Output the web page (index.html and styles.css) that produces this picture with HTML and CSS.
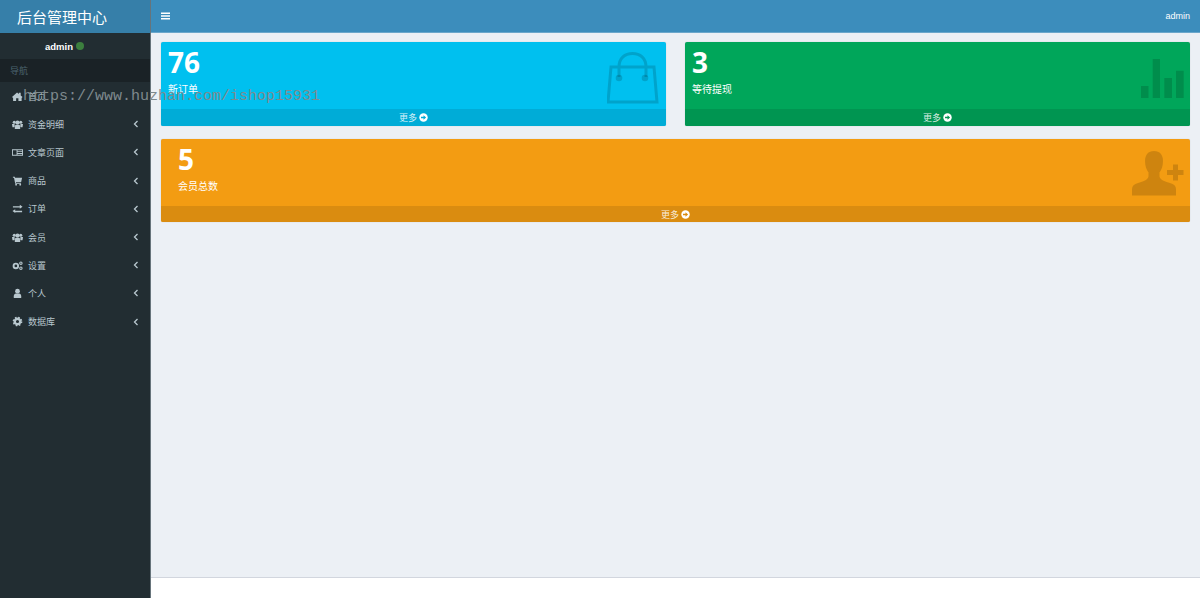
FILE: index.html
```html
<!DOCTYPE html>
<html lang="zh-CN">
<head>
  <meta charset="UTF-8">
  <title>后台管理中心</title>
  <link rel="stylesheet" href="styles.css">
</head>
<body>
  <aside class="sidebar">
    <div class="logo">后台管理中心</div>
    <div class="user-panel">admin <span class="online"></span></div>
    <div class="nav-label">导航</div>
    <ul class="menu">
      <li>
        <svg class="menu-icon" viewBox="0 0 12 12"><path d="M0 6.500 5.500 1.500 7.500 3.200V2H9.500V5L11.500 6.500 10.500 7.500V11H7V8H4.500V11H1.200V7.500Z"/></svg>
        <span>首页</span>
      </li>
      <li>
        <svg class="menu-icon" viewBox="0 0 12 12"><circle cx="2.500" cy="3.500" r="1.700"/><circle cx="9.500" cy="3.500" r="1.700"/><circle cx="6" cy="4" r="2.300"/><path d="M0 5.500H2.800L3 9H0.500ZM12 5.500H9.200L9 9H11.500ZM3.500 6.500H8.500L9 11H3Z"/></svg>
        <span>资金明细</span>
        <svg class="caret" viewBox="0 0 6 8"><path d="M4.500 1 1.500 4 4.500 7"/></svg>
      </li>
      <li>
        <svg class="menu-icon" viewBox="0 0 12 12"><path fill-rule="evenodd" d="M0 2.500H12V9.500H0ZM1 3.500V8.500H5V3.500ZM6 3.500V4.500H11V3.500ZM6 5.500V6.500H11V5.500ZM6 7.500V8.500H11V7.500Z"/></svg>
        <span>文章页面</span>
        <svg class="caret" viewBox="0 0 6 8"><path d="M4.500 1 1.500 4 4.500 7"/></svg>
      </li>
      <li>
        <svg class="menu-icon" viewBox="0 0 12 12"><path d="M1 2H3L3.300 3H11L10 7.500H4.200L4.400 8.500H9.800V9.500H3.500L2.200 3H1Z"/><circle cx="4.500" cy="10.500" r="1"/><circle cx="9" cy="10.500" r="1"/></svg>
        <span>商品</span>
        <svg class="caret" viewBox="0 0 6 8"><path d="M4.500 1 1.500 4 4.500 7"/></svg>
      </li>
      <li>
        <svg class="menu-icon" viewBox="0 0 12 12"><path d="M1 3.500H8.500V1.800L11.500 4.200 8.500 6.200V5H1ZM11 7V8.500H3.500V6.800L0.500 8.800 3.500 11V10H11Z"/></svg>
        <span>订单</span>
        <svg class="caret" viewBox="0 0 6 8"><path d="M4.500 1 1.500 4 4.500 7"/></svg>
      </li>
      <li>
        <svg class="menu-icon" viewBox="0 0 12 12"><circle cx="2.500" cy="3.500" r="1.700"/><circle cx="9.500" cy="3.500" r="1.700"/><circle cx="6" cy="4" r="2.300"/><path d="M0 5.500H2.800L3 9H0.500ZM12 5.500H9.200L9 9H11.500ZM3.500 6.500H8.500L9 11H3Z"/></svg>
        <span>会员</span>
        <svg class="caret" viewBox="0 0 6 8"><path d="M4.500 1 1.500 4 4.500 7"/></svg>
      </li>
      <li>
        <svg class="menu-icon" viewBox="0 0 12 12"><circle class="ring" cx="4.200" cy="6.500" r="2.500"/><circle class="ring thin" cx="9.700" cy="3.500" r="1.300"/><circle class="ring thin" cx="9.700" cy="9" r="1.300"/></svg>
        <span>设置</span>
        <svg class="caret" viewBox="0 0 6 8"><path d="M4.500 1 1.500 4 4.500 7"/></svg>
      </li>
      <li>
        <svg class="menu-icon" viewBox="0 0 12 12"><circle cx="6" cy="3.500" r="2.600"/><path d="M2 11C1.500 8 2.500 6.200 4 6H8C9.500 6.200 10.500 8 10 11Z"/></svg>
        <span>个人</span>
        <svg class="caret" viewBox="0 0 6 8"><path d="M4.500 1 1.500 4 4.500 7"/></svg>
      </li>
      <li>
        <svg class="menu-icon" viewBox="0 0 12 12"><circle class="ring cog" cx="6" cy="6" r="3"/><circle class="ring teeth" cx="6" cy="6" r="4.300"/></svg>
        <span>数据库</span>
        <svg class="caret" viewBox="0 0 6 8"><path d="M4.500 1 1.500 4 4.500 7"/></svg>
      </li>
    </ul>
  </aside>

  <div class="main">
    <header class="topbar">
      <svg class="bars" viewBox="0 0 9 8"><path d="M0 0.500H9V2H0ZM0 3.200H9V4.700H0ZM0 5.900H9V7.400H0Z"/></svg>
      <span class="top-user">admin</span>
    </header>

    <div class="content">
      <div class="card cyan">
        <div class="card-body">
          <div class="num">76</div>
          <div class="label">新订单</div>
          <svg class="bag-icon" viewBox="0 0 52 52"><path d="M4 15H47L50 50H1ZM12 25V15C12 6 18 1.500 25.500 1.500S39 6 39 15V25"/><circle cx="12" cy="26" r="3.300"/><circle cx="38" cy="26" r="3.300"/></svg>
        </div>
        <a class="more">更多 <svg class="arrow" viewBox="0 0 10 10"><circle cx="5" cy="5" r="4.700"/><path d="M2.200 4.200H5V2.400L7.900 5 5 7.600V5.800H2.200Z"/></svg></a>
      </div>

      <div class="card green">
        <div class="card-body">
          <div class="num">3</div>
          <div class="label">等待提现</div>
          <svg class="chart-icon" viewBox="0 0 43 39"><path d="M0 27H7.500V39H0ZM11.700 0H19V39H11.700ZM23.300 19H31V39H23.300ZM35 11.700H42.700V39H35Z"/></svg>
        </div>
        <a class="more">更多 <svg class="arrow" viewBox="0 0 10 10"><circle cx="5" cy="5" r="4.700"/><path d="M2.200 4.200H5V2.400L7.900 5 5 7.600V5.800H2.200Z"/></svg></a>
      </div>

      <div class="card orange wide">
        <div class="card-body">
          <div class="num">5</div>
          <div class="label">会员总数</div>
          <svg class="person-icon" viewBox="0 0 52 45"><path d="M22 0C28 0 31 4 31 10C31 15 29.500 19 27.500 21.500V25C27.500 28 31 30 38 32C42 33.200 44 35 44 38V44.500H0V38C0 35 2 33.200 6 32C13 30 16.500 28 16.500 25V21.500C14.500 19 13 15 13 10C13 4 16 0 22 0Z"/><path d="M35 19H41V13.500H46V19H51.500V24H46V29.500H41V24H35Z"/></svg>
        </div>
        <a class="more">更多 <svg class="arrow" viewBox="0 0 10 10"><circle cx="5" cy="5" r="4.700"/><path d="M2.200 4.200H5V2.400L7.900 5 5 7.600V5.800H2.200Z"/></svg></a>
      </div>
    </div>

    <footer class="page-foot"></footer>
  </div>

  <div class="watermark">https://www.huzhan.com/ishop15931</div>
</body>
</html>
```

FILE: styles.css
```css
* {
  box-sizing: border-box;
}

html, body {
  height: 100%;
}

body {
  margin: 0;
  display: flex;
  overflow: hidden;
  font-family: "Noto Sans", "Noto Sans CJK SC", sans-serif;
  font-size: 10px;
  background: #fff;
  color: #fff;
}

/* sidebar */
.sidebar {
  width: 151px;
  flex: none;
  background: #222d32;
  border-right: 1px solid #67747b;
}

.logo {
  height: 33px;
  background: #367fa9;
  font-family: "Noto Sans CJK SC", sans-serif;
  font-size: 15px;
  line-height: 34px;
  padding-left: 17px;
}

.user-panel {
  height: 26px;
  display: flex;
  align-items: center;
  justify-content: center;
  gap: 3px;
  padding-right: 21px;
  font-family: "Liberation Sans", sans-serif;
  font-weight: 700;
  font-size: 9.500px;
}

.online {
  width: 8px;
  height: 8px;
  border-radius: 50%;
  background: #3c7f3e;
}

.nav-label {
  height: 23px;
  background: #1a2226;
  color: #4b646f;
  font-size: 9px;
  line-height: 23px;
  padding-left: 10px;
  font-family: "Noto Sans CJK SC", sans-serif;
}

.menu {
  list-style: none;
  margin: 0;
  padding: 0;
}

.menu li {
  height: 28.2px;
  display: flex;
  align-items: center;
  padding: 0 11px 0 12px;
  color: #b8c7ce;
  font-size: 9px;
  font-family: "Noto Sans CJK SC", sans-serif;
}

.menu span {
  margin-left: 5px;
  flex: 1;
}

.menu-icon {
  width: 11px;
  height: 11px;
  fill: #b8c7ce;
  flex: none;
}

.ring {
  fill: none;
  stroke: #b8c7ce;
  stroke-width: 2;
}

.ring.thin {
  stroke-width: 1.200;
}

.ring.cog {
  stroke-width: 2.600;
}

.ring.teeth {
  stroke-width: 2;
  stroke-dasharray: 1.700 1.700;
}

.caret {
  width: 6px;
  height: 8px;
  fill: none;
  stroke: #b8c7ce;
  stroke-width: 1.300;
}

/* main */
.main {
  flex: 1;
  display: flex;
  flex-direction: column;
  min-width: 0;
}

.topbar {
  height: 33px;
  flex: none;
  display: flex;
  align-items: center;
  justify-content: space-between;
  padding: 0 10px;
  background: #3c8dbc;
  border-bottom: 1px solid #6ba7cb;
}

.bars {
  width: 9px;
  height: 8px;
  fill: #fff;
}

.top-user {
  font-family: "Liberation Sans", sans-serif;
  font-size: 9px;
}

.content {
  flex: 1;
  background: #ecf0f5;
  padding: 9px 10px 0;
  display: grid;
  grid-template-columns: 505px 505px;
  column-gap: 19px;
  row-gap: 13px;
  align-content: start;
}

.page-foot {
  height: 21px;
  flex: none;
  background: #fff;
  border-top: 1px solid #d2d6de;
}

.card {
  height: 84px;
  display: flex;
  flex-direction: column;
  border-radius: 2px;
  overflow: hidden;
  box-shadow: 0 0 1px rgba(0, 0, 0, 0.25);
}

.card.wide {
  grid-column: 1 / 3;
  height: 83px;
}

.card-body {
  flex: 1;
  position: relative;
  padding: 4px 7px;
}

.wide .card-body {
  padding-left: 17px;
}

.num {
  font-size: 28px;
  font-weight: 700;
  line-height: 32px;
}

.label {
  margin-top: 4px;
  font-family: "Noto Sans CJK SC", sans-serif;
  font-size: 10px;
  line-height: 14px;
}

.more {
  height: 17px;
  flex: none;
  display: flex;
  align-items: center;
  justify-content: center;
  gap: 2px;
  font-family: "Noto Sans CJK SC", sans-serif;
  font-size: 9px;
  color: rgba(255, 255, 255, 0.85);
}

.wide .more {
  height: 16px;
}

.arrow {
  width: 9px;
  height: 9px;
}

.arrow circle {
  fill: #fff;
}

.cyan {
  background: #00c0ef;
}

.cyan .more {
  background: #00acd7;
}

.cyan .arrow path {
  fill: #00acd7;
}

.green {
  background: #00a65a;
}

.green .more {
  background: #009551;
}

.green .arrow path {
  fill: #009551;
}

.orange {
  background: #f39c12;
}

.orange .more {
  background: #da8c10;
}

.orange .arrow path {
  fill: #da8c10;
}

/* big faded card icons */
.bag-icon, .chart-icon, .person-icon {
  position: absolute;
}

.bag-icon {
  right: 7px;
  top: 10px;
  width: 52px;
  height: 52px;
  fill: none;
  stroke: rgba(0, 0, 0, 0.15);
  stroke-width: 3;
}

.bag-icon circle {
  fill: rgba(0, 0, 0, 0.15);
  stroke: none;
}

.chart-icon {
  right: 6px;
  top: 17px;
  width: 43px;
  height: 39px;
  fill: rgba(0, 0, 0, 0.15);
}

.person-icon {
  right: 6px;
  top: 12px;
  width: 52px;
  height: 45px;
  fill: rgba(0, 0, 0, 0.15);
}

/* watermark laid over the page */
.watermark {
  position: absolute;
  left: 23px;
  top: 88px;
  font-family: "Liberation Mono", monospace;
  font-size: 15px;
  line-height: 18px;
  color: #7f8a8e;
}
```
